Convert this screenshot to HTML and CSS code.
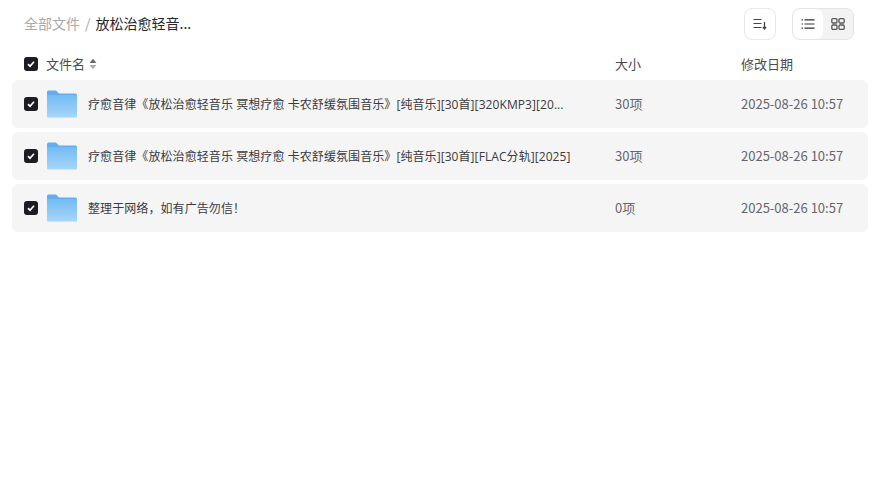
FILE: index.html
```html
<!DOCTYPE html>
<html lang="zh-CN">
<head>
    <meta charset="UTF-8">
    <title>放松治愈轻音乐</title>
    <link rel="stylesheet" href="styles.css">
</head>
<body>
    <div class="toolbar">
        <div class="crumbs">
            <span class="crumb-root">全部文件</span>
            <span class="crumb-sep">/</span>
            <span class="crumb-current">放松治愈轻音...</span>
        </div>
        <div class="tools">
            <button class="tool-btn">
                <svg width="16" height="16" viewBox="0 0 16 16" fill="none" stroke="#444" stroke-width="1.2">
                    <path d="M1.500 3.500h8M1.500 7.500h8M1.500 11.500h8"/>
                    <path d="M12.500 6v7M11 11l1.500 2 1.500-2" stroke-width="1.300"/>
                </svg>
            </button>
            <div class="view-switch">
                <span class="view-opt active">
                    <svg width="14" height="14" viewBox="0 0 14 14" fill="none" stroke="#333" stroke-width="1.2">
                        <path d="M3.500 2.800h10M3.500 7h10M3.500 11.200h10"/>
                        <path d="M.5 2.800h1.400M.5 7h1.400M.5 11.200h1.400"/>
                    </svg>
                </span>
                <span class="view-opt">
                    <svg width="14" height="14" viewBox="0 0 14 14" fill="none" stroke="#555" stroke-width="1.3">
                        <rect x=".8" y="1.600" width="5.200" height="4.400" rx="1.200"/>
                        <rect x="8" y="1.600" width="5.200" height="4.400" rx="1.200"/>
                        <rect x=".8" y="8" width="5.200" height="4.400" rx="1.200"/>
                        <rect x="8" y="8" width="5.200" height="4.400" rx="1.200"/>
                    </svg>
                </span>
            </div>
        </div>
    </div>

    <div class="list-head">
        <div class="col-name">
            <span class="check"><svg width="10" height="10" viewBox="0 0 10 10"><path d="M2 5.200l2 2 4-4.400" fill="none" stroke="#fff" stroke-width="1.700"/></svg></span>
            <span class="head-label">文件名</span>
            <svg class="sort-icon" width="8" height="12" viewBox="0 0 8 12">
                <path d="M4 .8L7.400 5H.6z" fill="#666"/>
                <path d="M4 11.200L.6 7h6.800z" fill="#aaa"/>
            </svg>
        </div>
        <div class="col-size">大小</div>
        <div class="col-date">修改日期</div>
    </div>

    <div class="file-list">
        <div class="file-row">
            <div class="col-name">
                <span class="check"><svg width="10" height="10" viewBox="0 0 10 10"><path d="M2 5.200l2 2 4-4.400" fill="none" stroke="#fff" stroke-width="1.700"/></svg></span>
                <svg class="folder" width="30" height="28" viewBox="0 0 30 28">
                    <use href="#folder-shape"/>
                </svg>
                <span class="file-name">疗愈音律《放松治愈轻音乐 冥想疗愈 卡农舒缓氛围音乐》[纯音乐][30首][320KMP3][20...</span>
            </div>
            <div class="col-size">30项</div>
            <div class="col-date">2025-08-26 10:57</div>
        </div>
        <div class="file-row">
            <div class="col-name">
                <span class="check"><svg width="10" height="10" viewBox="0 0 10 10"><path d="M2 5.200l2 2 4-4.400" fill="none" stroke="#fff" stroke-width="1.700"/></svg></span>
                <svg class="folder" width="30" height="28" viewBox="0 0 30 28">
                    <use href="#folder-shape"/>
                </svg>
                <span class="file-name">疗愈音律《放松治愈轻音乐 冥想疗愈 卡农舒缓氛围音乐》[纯音乐][30首][FLAC分轨][2025]</span>
            </div>
            <div class="col-size">30项</div>
            <div class="col-date">2025-08-26 10:57</div>
        </div>
        <div class="file-row">
            <div class="col-name">
                <span class="check"><svg width="10" height="10" viewBox="0 0 10 10"><path d="M2 5.200l2 2 4-4.400" fill="none" stroke="#fff" stroke-width="1.700"/></svg></span>
                <svg class="folder" width="30" height="28" viewBox="0 0 30 28">
                    <use href="#folder-shape"/>
                </svg>
                <span class="file-name">整理于网络，如有广告勿信！</span>
            </div>
            <div class="col-size">0项</div>
            <div class="col-date">2025-08-26 10:57</div>
        </div>
    </div>

    <svg width="0" height="0" class="defs">
        <defs>
            <linearGradient id="folder-front" x1="0" y1="0" x2="0" y2="1">
                <stop offset="0" stop-color="#72bbf4"/>
                <stop offset="1" stop-color="#a9d6f9"/>
            </linearGradient>
            <g id="folder-shape">
                <path d="M0 2a1.500 1.500 0 0 1 1.500-1.500h7.500l3 3h16.500a1.500 1.500 0 0 1 1.500 1.500v3h-30z" fill="#63aef0"/>
                <path d="M0 5h29a1 1 0 0 1 1 1v20.500a1 1 0 0 1-1 1h-28a1 1 0 0 1-1-1z" fill="url(#folder-front)"/>
            </g>
        </defs>
    </svg>
</body>
</html>
```
FILE: styles.css
```css
* {
    box-sizing: border-box;
}
body {
    margin: 0;
    padding: 8px 10px 0 12px;
    background-color: #fff;
    font-family: "Noto Sans CJK SC", "Liberation Sans", sans-serif;
    color: #333;
}
.toolbar {
    display: flex;
    justify-content: space-between;
    align-items: center;
    height: 32px;
    padding-left: 12px;
}
.crumbs {
    display: flex;
    align-items: center;
    padding-bottom: 2px;
    font-size: 14px;
}
.crumb-root {
    color: #a8a8ad;
}
.crumb-sep {
    margin: 0 5px;
    color: #a8a8ad;
}
.crumb-current {
    color: #26262b;
}
.tools {
    display: flex;
    gap: 16px;
    padding-right: 14px;
}
.tool-btn {
    display: flex;
    align-items: center;
    justify-content: center;
    width: 32px;
    height: 32px;
    padding: 0;
    background-color: #fff;
    border: 1px solid #e8e8e8;
    border-radius: 8px;
}
.view-switch {
    display: flex;
    width: 62px;
    height: 32px;
    background-color: #f3f3f3;
    border: 1px solid #e4e4e4;
    border-radius: 8px;
    overflow: hidden;
}
.view-opt {
    display: flex;
    flex: 1;
    align-items: center;
    justify-content: center;
}
.view-opt.active {
    background-color: #fff;
    border-radius: 8px;
}
.list-head, .file-row {
    display: flex;
    align-items: center;
    padding-left: 12px;
}
.list-head {
    height: 40px;
    padding-top: 8px;
    font-size: 13px;
    color: #4a4a50;
}
.file-list {
    display: flex;
    flex-direction: column;
    gap: 4px;
}
.file-row {
    height: 48px;
    background-color: #f5f5f5;
    border-radius: 6px;
    font-size: 13px;
}
.col-name {
    display: flex;
    align-items: center;
    width: 591px;
    min-width: 0;
}
.col-size {
    width: 126px;
    padding-bottom: 2px;
}
.col-date {
    flex: 1;
    padding-bottom: 2px;
}
.file-row .col-size, .file-row .col-date {
    color: #66666c;
}
.check {
    display: flex;
    align-items: center;
    justify-content: center;
    flex: none;
    width: 14px;
    height: 14px;
    background-color: #1c1c22;
    border-radius: 3px;
}
.head-label {
    margin-left: 8px;
    padding-bottom: 2px;
}
.sort-icon {
    margin-left: 4px;
}
.folder {
    flex: none;
    margin-left: 9px;
}
.file-name {
    margin-left: 11px;
    padding-bottom: 1px;
    font-family: "Open Sans", "Noto Sans CJK SC", sans-serif;
    font-size: 12px;
    letter-spacing: .08px;
    color: #3a3a40;
    white-space: nowrap;
}
.defs {
    position: absolute;
}
```
